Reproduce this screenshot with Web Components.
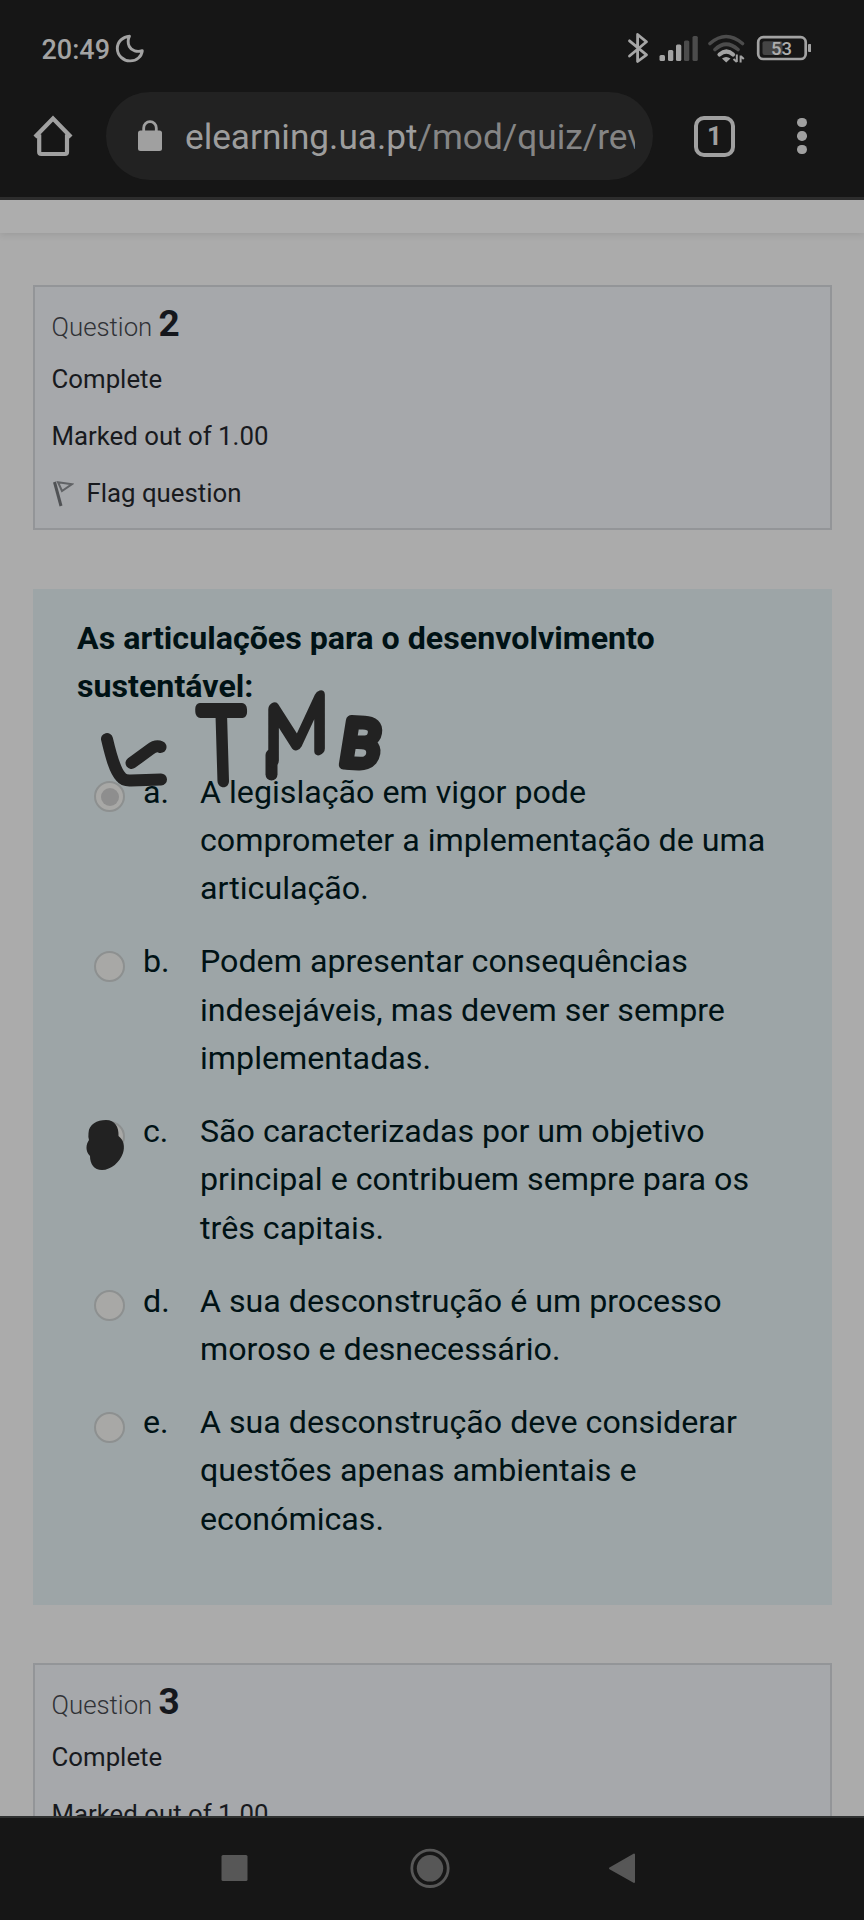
<!DOCTYPE html>
<html lang="pt">
<head>
<meta charset="utf-8">
<title>Quiz review</title>
<style>
html,body{margin:0;padding:0;background:#ababab}
body{font-family:Roboto,"Noto Sans",sans-serif;width:864px;height:1920px;overflow:hidden}
</style>
</head>
<body>
<phone-screen>
  <status-bar slot="top" time="20:49" battery="53"></status-bar>
  <browser-bar slot="top" tabs="1"><span slot="host">elearning.ua.pt</span><span slot="path">/mod/quiz/rev</span></browser-bar>
  <question-info number="2"><span slot="state">Complete</span><span slot="grade">Marked out of 1.00</span></question-info>
  <question-body>
    <span slot="stem">As articulações para o desenvolvimento sustentável:</span>
    <answer-option letter="a." checked>A legislação em vigor pode comprometer a implementação de uma articulação.</answer-option>
    <answer-option letter="b.">Podem apresentar consequências indesejáveis, mas devem ser sempre implementadas.</answer-option>
    <answer-option letter="c.">São caracterizadas por um objetivo principal e contribuem sempre para os três capitais.</answer-option>
    <answer-option letter="d.">A sua desconstrução é um processo moroso e desnecessário.</answer-option>
    <answer-option letter="e.">A sua desconstrução deve considerar questões apenas ambientais e económicas.</answer-option>
    <ink-notes slot="ink"></ink-notes>
  </question-body>
  <question-info number="3"><span slot="state">Complete</span><span slot="grade">Marked out of 1.00</span></question-info>
  <nav-bar slot="bottom"></nav-bar>
</phone-screen>
<script>
function define(name, html) {
  customElements.define(name, class extends HTMLElement {
    constructor() {
      super();
      const root = this.attachShadow({ mode: 'open' });
      const t = document.createElement('template');
      t.innerHTML = html;
      root.append(t.content.cloneNode(true));
      root.querySelectorAll('[data-attr]').forEach(n => {
        n.textContent = this.getAttribute(n.dataset.attr) || '';
      });
    }
  });
}

define('phone-screen', `
<style>
:host{display:flex;flex-direction:column;width:864px;height:1920px;overflow:hidden}
header{flex:none;height:197px;background:#161616;border-bottom:3px solid #2d2d2d}
main{flex:1;min-height:0;overflow:hidden;background:#ababab;display:flex;flex-direction:column}
.strip{flex:none;height:33px;background:#adadad;box-shadow:0 2px 7px rgba(0,0,0,.09)}
.page{flex:none;padding:52px 32px 0 33px;display:flex;flex-direction:column;gap:59px}
</style>
<header><slot name="top"></slot></header>
<main><div class="strip"></div><div class="page"><slot></slot></div></main>
<slot name="bottom"></slot>`);

define('status-bar', `
<style>
:host{display:flex;align-items:center;box-sizing:border-box;height:92px;padding:6px 53px 0 41.500px;color:#a3a3a3}
time{font-size:27px;font-weight:500;line-height:32px;position:relative;top:.5px}
svg{display:block;flex:none}
.moon{margin-left:5px}
.right{margin-left:auto;position:relative;top:-1px}
</style>
<time data-attr="time"></time>
<svg class="moon" width="30" height="30" viewBox="0 0 30 30"><path d="M14.500 2.200C8 2.600 2.300 7.500 2.300 14.500a12.600 12.600 0 0 0 13 12.400c6.500 0 11.200-4.300 12-10.200-5.200 1.600-10.800.2-13-4.200-1.700-3.500-1.400-7.200.2-10.300z" fill="none" stroke="#a3a3a3" stroke-width="2.900" stroke-linejoin="round"/></svg>
<svg class="right" width="186" height="36" viewBox="625 30 186 36">
  <path d="M629.500 40.800L646.500 54.800L637.600 61.500V34.500L646.500 41.800L629.500 56" fill="none" stroke="#a6a6a6" stroke-width="2.800" stroke-linejoin="round" stroke-linecap="round"/>
  <g fill="#a3a3a3"><rect x="659.500" y="55" width="5.500" height="6" rx="1.500"/><rect x="668" y="50" width="5.300" height="11" rx="1.500"/><rect x="676" y="44.500" width="5.300" height="16.500" rx="1.500"/></g>
  <g fill="#4c4c4c"><rect x="684" y="40.500" width="5.300" height="20.500" rx="1.500"/><rect x="692.500" y="36" width="5.300" height="25" rx="1.500"/></g>
  <g fill="none" stroke-width="3.600" stroke-linecap="round">
    <path d="M710 43.500Q726 29.500 742.500 43.500M715 49.500Q726 39 738 49.500" stroke="#4c4c4c"/>
    <path d="M719.500 54.500Q726.500 48.500 733 54.500" stroke="#a3a3a3" stroke-width="4.200"/>
  </g>
  <path d="M722 58.500Q726 55.500 730.500 58.500L726.200 62.500Z" fill="#a3a3a3"/>
  <path d="M736.800 54.500V62M736.800 62L733.500 59M740.600 62.500V55.500M740.600 56L743.800 59" stroke="#a3a3a3" stroke-width="2" fill="none"/>
  <rect x="758.200" y="37.200" width="47.500" height="21.800" rx="5" fill="none" stroke="#a3a3a3" stroke-width="2.700"/>
  <rect x="762.500" y="41.300" width="20" height="13.700" rx="2" fill="#454545"/>
  <rect x="808" y="44" width="3.200" height="8" rx="1" fill="#a3a3a3"/>
  <text x="781.500" y="55" text-anchor="middle" font-size="18.500" font-weight="500" fill="#adadad" data-attr="battery"></text>
</svg>`);

define('browser-bar', `
<style>
:host{display:flex;align-items:center;height:88px;padding-right:0}
svg{display:block;flex:none}
.home{margin:0 32px 0 33px}
.pill{display:flex;align-items:center;box-sizing:border-box;width:547px;height:88px;border-radius:44px;background:#222;padding:0 18px 0 31px}
.url{flex:1;overflow:hidden;white-space:nowrap;margin-left:22px;font-size:35.200px;line-height:50px;color:#9d9d9d;position:relative;top:1px}
.path{color:#858585}
.tab{box-sizing:border-box;width:41px;height:41px;border:4px solid #a0a0a0;border-radius:10px;margin-left:41px;display:flex;align-items:center;justify-content:center;font-size:26px;font-weight:700;color:#a0a0a0;line-height:30px}
.menu{display:flex;flex-direction:column;gap:3.800px;margin-left:62px}
.menu i{width:9.500px;height:9.500px;border-radius:50%;background:#a0a0a0}
</style>
<svg class="home" width="41" height="42" viewBox="0 0 41 42"><path d="M2 22L20 3.500L38 22M6.200 19.500V37a2 2 0 0 0 2 2H32a2 2 0 0 0 2-2V19.500" fill="none" stroke="#a0a0a0" stroke-width="4.200"/></svg>
<div class="pill">
<svg width="26" height="34" viewBox="0 0 26 34"><rect x="1" y="11.500" width="24" height="20.500" rx="2.500" fill="#a0a0a0"/><path d="M6.700 13V9a6.300 6.300 0 0 1 12.600 0V13" fill="none" stroke="#a0a0a0" stroke-width="2.800"/></svg>
<div class="url"><slot name="host"></slot><span class="path"><slot name="path"></slot></span></div>
</div>
<div class="tab" data-attr="tabs"></div>
<div class="menu"><i></i><i></i><i></i></div>`);

define('question-info', `
<style>
:host{display:block;box-sizing:border-box;height:245px;border:2px solid #939598;background:#a6a8ab;padding:17px 16.500px;color:#181a1e;font-size:25.800px;line-height:39px}
h3{margin:0;font-size:25.800px;font-weight:300;line-height:39px;height:39px;color:#303236}
h3 b{font-size:37px;font-weight:700;color:#15171c}
.row{height:39px;margin-top:18px}
.row.first{margin-top:16.500px}
.flag{display:flex;align-items:center}
.flag svg{margin-right:13px}
</style>
<h3>Question <b data-attr="number"></b></h3>
<div class="row first"><slot name="state"></slot></div>
<div class="row"><slot name="grade"></slot></div>
<div class="row flag"><svg width="22" height="27" viewBox="0 0 22 27"><path d="M2.500 2L9 26" stroke="#505255" stroke-width="3"/><path d="M6 2.200L20 4.200L10 11Z" fill="none" stroke="#606265" stroke-width="2"/></svg><span>Flag question</span></div>`);

define('question-body', `
<style>
:host{display:block;position:relative;box-sizing:border-box;height:1016px;margin-bottom:-1px;background:#9da5a7;padding:26px 44px 0;color:#001215;font-size:32.200px;line-height:48.400px}
.stem{font-weight:700;height:127px;width:640px;margin-top:-1px}
.list{display:flex;flex-direction:column;gap:24.500px;margin-top:26.600px}
</style>
<div class="stem"><slot name="stem"></slot></div>
<div class="list"><slot></slot></div>
<slot name="ink"></slot>`);

define('answer-option', `
<style>
:host{display:grid;grid-template-columns:66px 57px 580px}
.radio{box-sizing:border-box;width:31px;height:31px;border-radius:50%;border:2px solid #8d9090;background:#a8a8a6;margin:13.500px 0 0 17px;display:flex;align-items:center;justify-content:center}
:host([checked]) .radio::after{content:"";width:18px;height:18px;border-radius:50%;background:#8e8e8e}
</style>
<span class="radio"></span><span data-attr="letter"></span><span><slot></slot></span>`);

define('ink-notes', `
<style>
:host{position:absolute;left:0;top:0;width:799px;height:1016px;pointer-events:none}
svg{display:block}
text{stroke:#222;fill:#222;stroke-linejoin:round;stroke-linecap:round;vector-effect:non-scaling-stroke}
</style>
<svg width="799" height="1016" viewBox="33 589 799 1016">
  <g fill="none" stroke="#222" stroke-width="12" stroke-linecap="round" stroke-linejoin="round">
    <path d="M107 739C111 756 115 771 121 777Q124 781 131 780.500L161 779.500M131.500 763L150 749.500Q156 745 160.500 747"/>
    <path d="M271.500 755V774.500"/>
  </g>
  <text transform="matrix(.77 0 .03 1 200 781)" font-size="101" font-weight="100" style="stroke-width:11px">T</text>
  <text transform="matrix(.92 -.24 0 1 265 764)" font-family="Lato" font-size="77" font-weight="100" style="stroke-width:10.500px">M</text>
  <text transform="matrix(1 .06 -.16 1 338.500 764)" font-size="62" font-weight="300" style="stroke-width:10.500px">B</text>
  <path d="M88.500 1133C89 1124 97 1120 106 1120C115 1120 119 1127 118.500 1136C124 1140 125 1147 123 1153C120 1162 111 1170 102 1170C94 1170 90 1164 90 1156C85 1151 86 1144 89 1140Q88 1137 88.500 1133Z" fill="#222"/>
</svg>`);

define('nav-bar', `
<style>
:host{flex:none;display:block;box-sizing:border-box;height:104px;background:#161616;border-top:2px solid #2f3131}
svg{display:block}
</style>
<svg width="864" height="102" viewBox="0 1818 864 102">
  <rect x="221.500" y="1855" width="26" height="26" rx="1.500" fill="#575757"/>
  <circle cx="430" cy="1868.300" r="18.200" fill="none" stroke="#575757" stroke-width="2.800"/>
  <circle cx="430" cy="1868.300" r="13.200" fill="#575757"/>
  <path d="M634 1854.500V1882L610 1868.300Z" fill="#575757" stroke="#575757" stroke-width="2" stroke-linejoin="round"/>
</svg>`);
</script>
</body>
</html>
